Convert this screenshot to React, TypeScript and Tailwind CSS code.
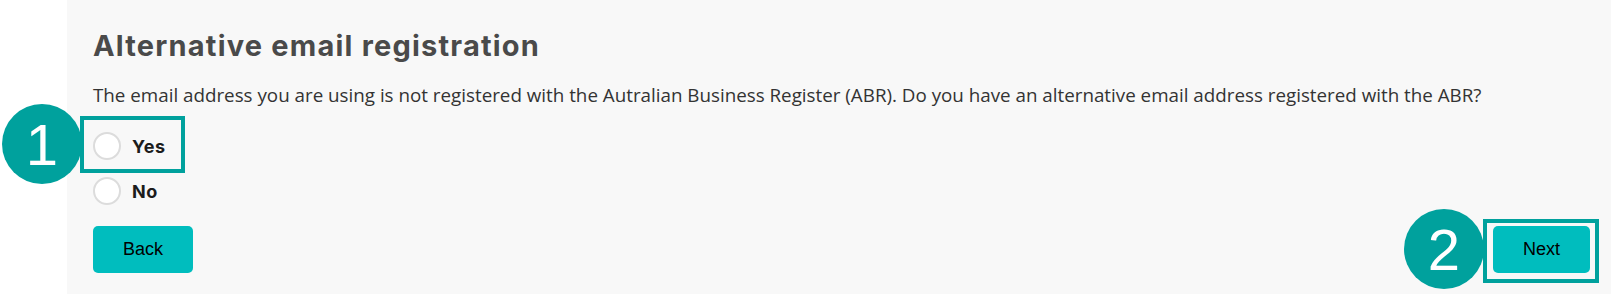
const annotationFont = { fontFamily: '"Liberation Sans", Arial, sans-serif' }

function Radio({ label }: { label: string }) {
  return (
    <label className="flex h-7 items-center gap-[11px]">
      <span className="h-7 w-7 shrink-0 rounded-full border-2 border-[#dcdcdc] bg-white" />
      <span className="font-['Inter',sans-serif] text-[18px] font-bold tracking-[0.6px] text-[#1c1c1c]">{label}</span>
    </label>
  )
}

export default function App() {
  return (
    <div className="relative flex h-[294px] w-full overflow-hidden bg-white">
      <div className="w-[67px] shrink-0 bg-white" />
      <div className="flex flex-1 flex-col bg-[#f8f8f8] pl-[26px] pr-[21px] pt-[28px]">
        <h2 className="font-['Inter',sans-serif] text-[29px] font-bold leading-[36px] tracking-[1.2px] text-[#4a4a4a]">
          Alternative email registration
        </h2>
        <p className="mt-[19px] font-['Open_Sans',sans-serif] text-[18.8px] leading-[24px] text-[#333333]">
          The email address you are using is not registered with the Autralian Business Register (ABR). Do you have an alternative email address registered with the ABR?
        </p>
        <div className="mt-[25px] flex flex-col gap-[17px]">
          <Radio label="Yes" />
          <Radio label="No" />
        </div>
        <div className="mt-[21px] flex items-center justify-between">
          <button className="h-[47px] w-[100px] rounded-[5px] bg-[#00bdbe] text-[18px] text-black" style={annotationFont}>
            Back
          </button>
          <button className="h-[47px] w-[97px] rounded-[5px] bg-[#00bdbe] text-[18px] text-black" style={annotationFont}>
            Next
          </button>
        </div>
      </div>

      {/* annotation overlays */}
      <div className="absolute left-[80px] top-[116px] h-[57px] w-[105px] border-4 border-[#00a19d]" />
      <div className="absolute left-[2px] top-[104px] flex h-[80px] w-[80px] items-center justify-center rounded-full bg-[#00a19d] text-[58px] text-white" style={annotationFont}>
        1
      </div>
      <div className="absolute left-[1483px] top-[219px] h-[64px] w-[116px] border-4 border-[#00a19d]" />
      <div className="absolute left-[1404px] top-[209px] flex h-[80px] w-[80px] items-center justify-center rounded-full bg-[#00a19d] text-[58px] text-white" style={annotationFont}>
        2
      </div>
    </div>
  )
}
